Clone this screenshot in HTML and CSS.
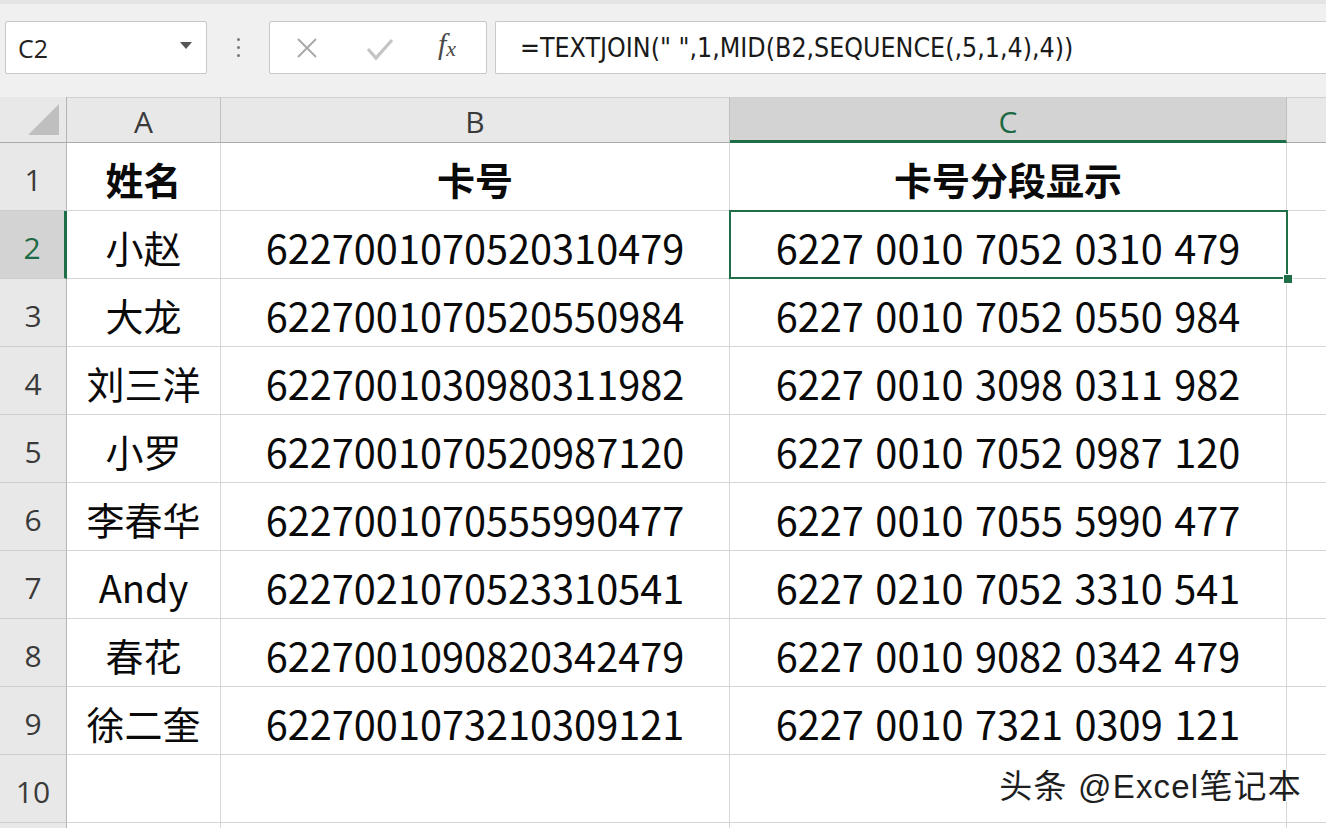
FILE: index.html
```html
<!DOCTYPE html>
<html lang="zh-CN">
<head>
<meta charset="utf-8">
<title>Excel</title>
<link rel="stylesheet" href="styles.css">
</head>
<body>
<div class="app">
  <div class="toolbar">
    <div class="namebox">
      <span class="ref">C2</span>
      <span class="caret"></span>
    </div>
    <div class="dots"><i></i><i></i><i></i></div>
    <div class="btnbox">
      <svg class="ico-x" width="22" height="22" viewBox="0 0 22 22"><path d="M2 2 L20 20 M20 2 L2 20" stroke="#a9a9a9" stroke-width="2" fill="none"/></svg>
      <svg class="ico-ok" width="28" height="24" viewBox="0 0 28 24"><path d="M2 12 L10 21 L26 3" stroke="#c4c4c4" stroke-width="3.2" fill="none"/></svg>
      <span class="fx">f<sub>x</sub></span>
    </div>
    <div class="formula">=TEXTJOIN(" ",1,MID(B2,SEQUENCE(,5,1,4),4))</div>
  </div>
  <div class="sheet">
    <div class="corner"><span class="tri"></span></div>
    <div class="colh">A</div>
    <div class="colh">B</div>
    <div class="colh sel">C</div>
    <div class="colh last"></div>

    <div class="rowh">1</div>
    <div class="cell b">姓名</div>
    <div class="cell b">卡号</div>
    <div class="cell b">卡号分段显示</div>
    <div class="cell last"></div>

    <div class="rowh sel">2</div>
    <div class="cell">小赵</div>
    <div class="cell num">6227001070520310479</div>
    <div class="cell num active">6227 0010 7052 0310 479<span class="frame"></span><span class="handle"></span></div>
    <div class="cell last"></div>

    <div class="rowh">3</div>
    <div class="cell">大龙</div>
    <div class="cell num">6227001070520550984</div>
    <div class="cell num">6227 0010 7052 0550 984</div>
    <div class="cell last"></div>

    <div class="rowh">4</div>
    <div class="cell">刘三洋</div>
    <div class="cell num">6227001030980311982</div>
    <div class="cell num">6227 0010 3098 0311 982</div>
    <div class="cell last"></div>

    <div class="rowh">5</div>
    <div class="cell">小罗</div>
    <div class="cell num">6227001070520987120</div>
    <div class="cell num">6227 0010 7052 0987 120</div>
    <div class="cell last"></div>

    <div class="rowh">6</div>
    <div class="cell">李春华</div>
    <div class="cell num">6227001070555990477</div>
    <div class="cell num">6227 0010 7055 5990 477</div>
    <div class="cell last"></div>

    <div class="rowh">7</div>
    <div class="cell">Andy</div>
    <div class="cell num">6227021070523310541</div>
    <div class="cell num">6227 0210 7052 3310 541</div>
    <div class="cell last"></div>

    <div class="rowh">8</div>
    <div class="cell">春花</div>
    <div class="cell num">6227001090820342479</div>
    <div class="cell num">6227 0010 9082 0342 479</div>
    <div class="cell last"></div>

    <div class="rowh">9</div>
    <div class="cell">徐二奎</div>
    <div class="cell num">6227001073210309121</div>
    <div class="cell num">6227 0010 7321 0309 121</div>
    <div class="cell last"></div>

    <div class="rowh">10</div>
    <div class="cell"></div>
    <div class="cell"></div>
    <div class="cell"></div>
    <div class="cell last"></div>

    <div class="rowh"></div>
    <div class="cell"></div>
    <div class="cell"></div>
    <div class="cell"></div>
    <div class="cell last"></div>
  </div>
  <div class="watermark">头条 @Excel笔记本</div>
</div>
</body>
</html>
```

FILE: styles.css
```css
* { box-sizing: border-box; }
html, body { margin: 0; padding: 0; }
body {
  width: 1326px;
  height: 828px;
  overflow: hidden;
  background: #ffffff;
  font-family: "Noto Sans CJK SC", "Noto Sans", sans-serif;
}
.app {
  position: relative;
  width: 1326px;
  height: 828px;
  overflow: hidden;
}
.toolbar {
  height: 97px;
  background: #f0f0f0;
  border-top: 4px solid #e4e4e4;
  display: flex;
  align-items: flex-start;
  padding-top: 17px;
  padding-left: 5px;
}
.namebox {
  width: 202px;
  height: 53px;
  background: #fff;
  border: 1px solid #c8c8c8;
  border-radius: 2px;
  display: flex;
  align-items: center;
  justify-content: space-between;
  padding: 0 14px 0 12px;
}
.ref {
  font-family: "Open Sans", "Noto Sans", sans-serif;
  font-size: 25px;
  color: #222;
}
.caret {
  width: 0; height: 0;
  border-left: 6px solid transparent;
  border-right: 6px solid transparent;
  border-top: 7px solid #555;
  margin-top: -4px;
}
.dots {
  width: 62px;
  height: 53px;
  display: flex;
  flex-direction: column;
  align-items: center;
  justify-content: center;
  gap: 5px;
}
.dots i {
  display: block;
  width: 3px; height: 3px;
  border-radius: 50%;
  background: #777;
}
.btnbox {
  width: 218px;
  height: 53px;
  background: #fff;
  border: 1px solid #c8c8c8;
  border-radius: 2px;
  display: flex;
  align-items: center;
  padding-left: 26px;
}
.ico-x { margin-right: 48px; }
.ico-ok { margin-right: 44px; margin-top: 2px; }
.fx {
  font-family: "Liberation Serif", serif;
  font-style: italic;
  font-size: 30px;
  color: #4a4a4a;
  margin-top: -6px;
}
.fx sub {
  font-size: 22px;
  vertical-align: -2px;
  margin-left: 0px;
}
.formula {
  flex: 1;
  margin-left: 8px;
  height: 53px;
  background: #fff;
  border: 1px solid #c8c8c8;
  border-right: none;
  border-radius: 2px 0 0 2px;
  display: flex;
  align-items: center;
  padding-left: 24px;
  font-family: "Liberation Sans Narrow", "DejaVu Sans Condensed", "Liberation Sans", sans-serif;
  font-size: 26.5px;
  color: #1a1a1a;
  white-space: pre;
}
.sheet {
  display: grid;
  grid-template-columns: 67px 154px 509px 557px 1fr;
  grid-template-rows: 46px repeat(10, 68px) 68px;
}
.corner, .colh {
  background: #e8e8e8;
  border-bottom: 1px solid #ababab;
  border-right: 1px solid #c0c0c0;
  position: relative;
}
.corner {
  border-right: 1px solid #b5b5b5;
}
.tri {
  position: absolute;
  right: 7px;
  bottom: 7px;
  width: 0; height: 0;
  border-left: 31px solid transparent;
  border-bottom: 31px solid #bfbfbf;
}
.colh {
  border-top: 1px solid #d0d0d0;
  display: flex;
  align-items: center;
  justify-content: center;
  font-family: "Open Sans", "Noto Sans", sans-serif;
  font-size: 30px;
  color: #3a3a3a;
  padding-top: 2px;
}
.colh.last { border-right: none; }
.colh.sel {
  background: #d3d3d3;
  color: #1d6a44;
  border-bottom: 3px solid #1e6e47;
  padding-top: 4px;
}
.rowh {
  background: #e8e8e8;
  border-bottom: 1px solid #cdcdcd;
  border-right: 1px solid #b5b5b5;
  display: flex;
  align-items: center;
  justify-content: center;
  font-family: "Open Sans", "Noto Sans", sans-serif;
  font-size: 30px;
  color: #3a3a3a;
  padding-top: 6px;
}
.rowh.sel {
  background: #d3d3d3;
  color: #1d6a44;
  border-right: 3px solid #1e6e47;
}
.cell {
  border-bottom: 1px solid #d6d6d6;
  border-right: 1px solid #d6d6d6;
  display: flex;
  align-items: center;
  justify-content: center;
  font-size: 38px;
  color: #0a0a0a;
  white-space: pre;
  position: relative;
  padding-top: 4px;
}
.cell.num {
  font-size: 39.7px;
  word-spacing: 2.6px;
  padding-top: 3px;
}
.cell.b { font-weight: 700; }
.cell.last { border-right: none; }
.frame {
  position: absolute;
  z-index: 2;
  left: -1px; top: -1px; right: -2px; bottom: -1px;
  border: 2px solid #1e6e47;
}
.handle {
  position: absolute;
  z-index: 3;
  right: -7px;
  bottom: -6px;
  width: 10px; height: 10px;
  background: #1e6e47;
  border: 1px solid #fff;
}
.watermark {
  position: absolute;
  right: 24px;
  bottom: 20px;
  font-family: "Liberation Sans", "Noto Sans CJK SC", sans-serif;
  font-size: 33px;
  letter-spacing: 1.2px;
  color: #1e1e1e;
  text-shadow: 1px 1px 0 #fff, -1px -1px 0 #fff, 1px -1px 0 #fff, -1px 1px 0 #fff;
}
```
